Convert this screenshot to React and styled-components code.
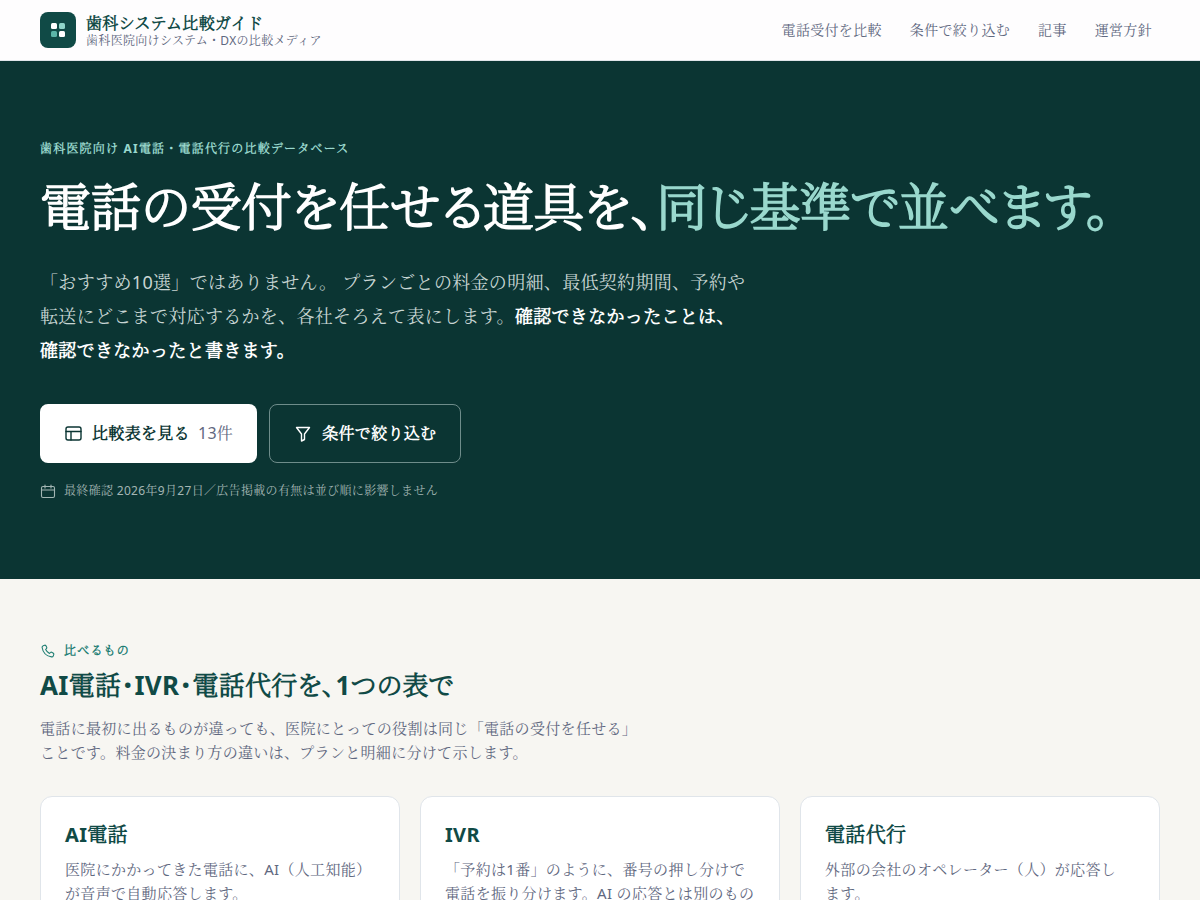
import React from 'react';
import styled, { createGlobalStyle } from 'styled-components';

const color = {
  brand: '#104a46',
  hero: '#0b3533',
  mint: '#99d8cd',
  teal: '#1d7d72',
  text: '#5f6880',
  page: '#f7f6f2',
  border: '#e0e5ea',
};

const font = {
  body: `'Noto Sans', 'Noto Serif CJK JP', 'Noto Sans CJK JP', sans-serif`,
  strong: `'Noto Sans', 'Noto Serif CJK JP Light', 'Noto Serif CJK JP', 'Noto Sans CJK JP', sans-serif`,
};

const bold = `
  font-family: ${font.strong};
  font-weight: 700;
`;

const GlobalStyle = createGlobalStyle`
  *, *::before, *::after {
    box-sizing: border-box;
  }

  body {
    margin: 0;
    background: ${color.page};
    color: ${color.text};
    font-family: ${font.body};
    font-size: 16px;
    line-height: 28px;
    letter-spacing: 0.02em;
  }

  h1, h2, h3, p {
    margin: 0;
  }

  a {
    color: inherit;
    text-decoration: none;
  }
`;

const NAV = ['電話受付を比較', '条件で絞り込む', '記事', '運営方針'];

const CARDS = [
  {
    title: 'AI電話',
    lines: ['医院にかかってきた電話に、AI（人工知能）', 'が音声で自動応答します。'],
  },
  {
    title: 'IVR',
    lines: ['「予約は1番」のように、番号の押し分けで', '電話を振り分けます。AI の応答とは別のもの', 'です。'],
  },
  {
    title: '電話代行',
    lines: ['外部の会社のオペレーター（人）が応答し', 'ます。'],
  },
];

function Lines({ lines }) {
  return lines.map((line, i) => (
    <React.Fragment key={line}>
      {i > 0 && <br />}
      {line}
    </React.Fragment>
  ));
}

function LogoIcon() {
  return (
    <svg width="36" height="36" viewBox="0 0 36 36" aria-hidden="true">
      <rect width="36" height="36" rx="8" fill={color.brand} />
      <rect x="11" y="11" width="6" height="6" rx="1.5" fill="#fff" />
      <rect x="19" y="11" width="6" height="6" rx="1.5" fill="#8fd6ca" />
      <rect x="11" y="19" width="6" height="6" rx="1.5" fill="#5bb5a8" />
      <rect x="19" y="19" width="6" height="6" rx="1.5" fill="#fff" />
    </svg>
  );
}

function TableIcon() {
  return (
    <Styled.Icon $size={18} viewBox="0 0 18 18" aria-hidden="true">
      <rect x="2" y="2" width="15" height="13" rx="2" />
      <path d="M2 6.500h15M7 6.500v8.500" />
    </Styled.Icon>
  );
}

function FilterIcon() {
  return (
    <Styled.Icon $size={18} viewBox="0 0 18 18" aria-hidden="true">
      <path d="M2.500 2.500h13l-5 6.500v5.500L7.500 16V9z" />
    </Styled.Icon>
  );
}

function CalendarIcon() {
  return (
    <Styled.Icon $size={16} $thin viewBox="0 0 16 16" aria-hidden="true">
      <rect x="1.500" y="3.500" width="13" height="11" rx="1.500" />
      <path d="M1.500 7h13M5 2v3M11 2v3" />
    </Styled.Icon>
  );
}

function PhoneIcon() {
  return (
    <Styled.Icon $size={16} $thin viewBox="0 0 16 16" aria-hidden="true">
      <path d="M4.700 2.200l-1.500.5c-.9.300-1.200 1-1.100 1.800.8 4.900 4.500 8.600 9.400 9.400.8.100 1.500-.2 1.800-1.100l.5-1.500c.1-.5 0-.8-.4-1.100l-1.700-.9c-.4-.2-.8-.2-1.100.1l-1.100 1C8 9.600 6.400 8 5.600 6.500l1-1.100c.3-.3.3-.7.1-1.100l-.9-1.700c-.3-.4-.6-.5-1.100-.4z" />
    </Styled.Icon>
  );
}

function App() {
  return (
    <div lang="ja">
      <GlobalStyle />
      <Styled.Header>
        <Styled.HeaderInner>
          <Styled.Brand href="#top">
            <LogoIcon />
            <span>
              <Styled.BrandName>歯科システム比較ガイド</Styled.BrandName>
              <Styled.BrandNote>歯科医院向けシステム・DXの比較メディア</Styled.BrandNote>
            </span>
          </Styled.Brand>
          <Styled.Nav aria-label="メイン">
            {NAV.map((item) => (
              <Styled.NavLink key={item} href="#nav">{item}</Styled.NavLink>
            ))}
          </Styled.Nav>
        </Styled.HeaderInner>
      </Styled.Header>

      <main>
        <Styled.Hero>
          <Styled.Container>
            <Styled.Eyebrow $light>歯科医院向け AI電話・電話代行の比較データベース</Styled.Eyebrow>
            <Styled.HeroTitle>
              電話の受付を任せる道具を、<em>同じ基準で並べます。</em>
            </Styled.HeroTitle>
            <Styled.Lead>
              「おすすめ10選」ではありません。 プランごとの料金の明細、最低契約期間、予約や<br />
              転送にどこまで対応するかを、各社そろえて表にします。
              <strong>確認できなかったことは、<br />確認できなかったと書きます。</strong>
            </Styled.Lead>
            <Styled.Actions>
              <Styled.ActionLink href="#compare" $filled>
                <TableIcon />
                <span>
                  比較表を見る
                  <Styled.Count>13件</Styled.Count>
                </span>
              </Styled.ActionLink>
              <Styled.ActionLink href="#filter">
                <FilterIcon />
                条件で絞り込む
              </Styled.ActionLink>
            </Styled.Actions>
            <Styled.Note>
              <CalendarIcon />
              最終確認 2026年9月27日／広告掲載の有無は並び順に影響しません
            </Styled.Note>
          </Styled.Container>
        </Styled.Hero>

        <Styled.Section>
          <Styled.Container>
            <Styled.Eyebrow>
              <PhoneIcon />
              比べるもの
            </Styled.Eyebrow>
            <Styled.SectionTitle>AI電話・IVR・電話代行を、1つの表で</Styled.SectionTitle>
            <Styled.Text>
              電話に最初に出るものが違っても、医院にとっての役割は同じ「電話の受付を任せる」<br />
              ことです。料金の決まり方の違いは、プランと明細に分けて示します。
            </Styled.Text>
            <Styled.Cards>
              {CARDS.map((card) => (
                <Styled.Card key={card.title}>
                  <Styled.CardTitle>{card.title}</Styled.CardTitle>
                  <Styled.Text><Lines lines={card.lines} /></Styled.Text>
                </Styled.Card>
              ))}
            </Styled.Cards>
          </Styled.Container>
        </Styled.Section>
      </main>
    </div>
  );
}

const Container = styled.div`
  max-width: 1200px;
  margin: 0 auto;
  padding: 0 40px;
`;

const Styled = {
  Container,
  Header: styled.header`
    background: #fefdfe;
    border-bottom: 1px solid ${color.border};
  `,
  HeaderInner: styled(Container)`
    display: flex;
    align-items: center;
    justify-content: space-between;
    min-height: 60px;
  `,
  Brand: styled.a`
    display: flex;
    align-items: center;
    gap: 10px;
  `,
  BrandName: styled.span`
    ${bold};
    display: block;
    color: ${color.brand};
    font-size: 16px;
    line-height: 22px;
  `,
  BrandNote: styled.span`
    display: block;
    font-size: 12px;
    line-height: 14px;
  `,
  Nav: styled.nav`
    display: flex;
    gap: 12px;
  `,
  NavLink: styled.a`
    padding: 8px;
    font-size: 14px;
    line-height: 24px;
  `,
  Hero: styled.section`
    padding: 77px 0;
    background: ${color.hero};
    color: #fff;
  `,
  Eyebrow: styled.p`
    ${bold};
    display: flex;
    align-items: center;
    gap: 8px;
    color: ${({ $light }) => ($light ? color.mint : color.teal)};
    font-size: 12px;
    line-height: 22px;
    letter-spacing: 0.1em;
  `,
  HeroTitle: styled.h1`
    ${bold};
    margin-top: 14px;
    font-size: 51px;
    line-height: 64px;
    letter-spacing: -0.01em;
    font-feature-settings: 'palt';

    em {
      color: ${color.mint};
      font-style: normal;
    }
  `,
  Lead: styled.p`
    margin-top: 27px;
    color: #c8d6d4;
    font-size: 18px;
    line-height: 34px;

    strong {
      ${bold};
      color: #fff;
    }
  `,
  Actions: styled.div`
    display: flex;
    flex-wrap: wrap;
    gap: 12px;
    margin-top: 37px;
  `,
  ActionLink: styled.a`
    ${bold};
    display: inline-flex;
    align-items: center;
    gap: 10px;
    padding: 14px 24px;
    border: ${({ $filled }) => ($filled ? 'none' : '1px solid #6f8d8b')};
    border-radius: 8px;
    background: ${({ $filled }) => ($filled ? '#fff' : 'transparent')};
    color: ${({ $filled }) => ($filled ? color.hero : '#fff')};
    line-height: 29px;
  `,
  Count: styled.span`
    margin-left: 8px;
    color: ${color.text};
    font-family: ${font.body};
    font-weight: 400;
  `,
  Note: styled.p`
    display: flex;
    align-items: center;
    gap: 8px;
    margin-top: 17px;
    color: #a3b6b4;
    font-size: 12px;
    line-height: 22px;
  `,
  Section: styled.section`
    padding: 61px 0;
  `,
  SectionTitle: styled.h2`
    ${bold};
    margin: 2px 0 10px;
    color: ${color.brand};
    font-size: 26px;
    line-height: 42px;
    letter-spacing: 0.01em;
    font-feature-settings: 'palt';
  `,
  Text: styled.p`
    margin-top: 8px;
    font-size: 15px;
    line-height: 24px;
  `,
  Cards: styled.div`
    display: grid;
    grid-template-columns: repeat(3, 1fr);
    gap: 20px;
    margin-top: 32px;

    @media (max-width: 860px) {
      grid-template-columns: 1fr;
    }
  `,
  Card: styled.article`
    padding: 24px;
    border: 1px solid ${color.border};
    border-radius: 12px;
    background: #fff;
  `,
  CardTitle: styled.h3`
    ${bold};
    color: ${color.brand};
    font-size: 20px;
    line-height: 28px;
  `,
  Icon: styled.svg`
    flex: none;
    width: ${({ $size }) => $size}px;
    height: ${({ $size }) => $size}px;
    fill: none;
    stroke: currentColor;
    stroke-width: ${({ $thin }) => ($thin ? 1.1 : 1.4)};
    stroke-linecap: round;
    stroke-linejoin: round;
  `,
};

export default App;
